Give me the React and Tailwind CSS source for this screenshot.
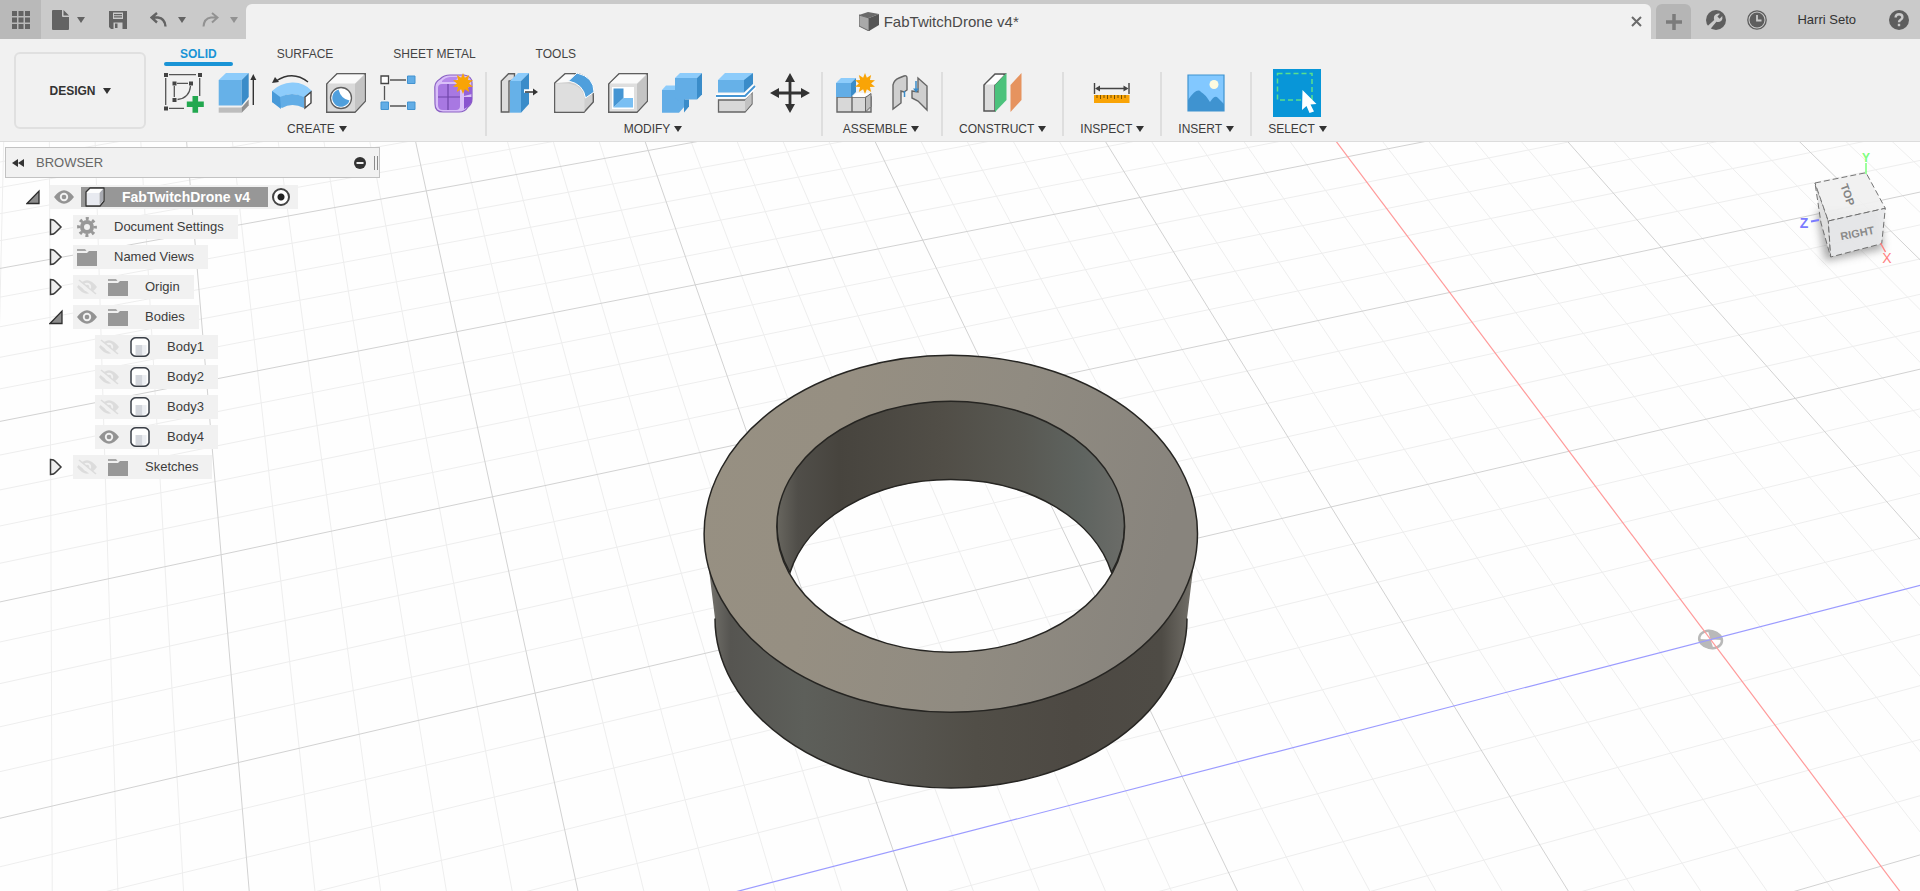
import React, { useState } from 'react';

const Caret = ({ className = 'fill-[#333]' }) => (
  <svg viewBox="0 0 8 6" className={`h-[6px] w-2 shrink-0 ${className}`} aria-hidden="true">
    <path d="M0 0h8L4 6z" />
  </svg>
);

const Icon = ({ children, size = 'h-10 w-10' }) => (
  <svg viewBox="0 0 40 40" className={`shrink-0 ${size}`} fill="none" aria-hidden="true">
    {children}
  </svg>
);

// Spiky sun that marks the "new" commands
const Burst = ({ cx, cy, r }) => {
  const points = Array.from({ length: 20 }, (_, i) => {
    const radius = i % 2 ? r * 0.58 : r;
    const angle = (i * Math.PI) / 10 - Math.PI / 2;
    return `${cx + radius * Math.cos(angle)},${cy + radius * Math.sin(angle)}`;
  }).join(' ');
  return <polygon points={points} fill="#f9a406" />;
};

/* ---------- ribbon icons ---------- */

const SketchIcon = () => (
  <Icon>
    <path d="M5 1.7h27M1.7 5v27M35.7 5v18M5 35.3h15M10.3 13v11M13 10.3h11M26.5 13q-1 12-13 13.5" stroke="#555" strokeWidth="1.3" />
    <path d="M0 0h4v4H0zM34 0h4v4h-4zM0 33.5h4v4H0zM8.5 8.5h4v4h-4zM25 8.5h4v4h-4zM8.5 25h4v4h-4z" fill="#444" />
    <path d="M28.5 23h5.600v5.500h5.700v5.600h-5.700v5.600h-5.600v-5.600h-5.700v-5.600h5.700z" fill="#22a84f" />
  </Icon>
);

const ExtrudeIcon = () => (
  <Icon>
    <path d="M.7 34.5h23v5.200H.7z" fill="#bdbdbd" />
    <path d="M23.7 34.5l7-8v6l-7 7.200z" fill="#909090" />
    <path d="M.7 7h23v25.500H.7z" fill="#66b1e8" />
    <path d="M.7 7L8 0h22.700l-7 7z" fill="#8dccfb" />
    <path d="M23.7 7l7-7v24l-7 8.500z" fill="#3a8cc9" />
    <path d="M35.3 5v27" stroke="#333" strokeWidth="1.4" />
    <path d="M32.3 7l3-6 3 6z" fill="#333" />
  </Icon>
);

const RevolveIcon = () => (
  <Icon>
    <path d="M36 9Q21-3 4 8" stroke="#333" strokeWidth="1.4" />
    <path d="M0 10l3-6 4 5z" fill="#333" />
    <path d="M0 18Q8 10 20 9.500T40 18l-7 7q-14-8-25 0z" fill="#8dccfb" />
    <path d="M0 18l8 6q12-6 24 0v11q-12-6-22 0L0 29z" fill="#62ade6" />
    <path d="M0 18l8 6 1 12-9-7z" fill="#4799d8" />
    <path d="M33 24l6-5v11l-6 5z" fill="#fff" stroke="#444" strokeWidth="1.4" />
  </Icon>
);

const HoleIcon = () => (
  <Icon>
    <path d="M.7 11L11 .7h28.300v27.600L29 39.300H.7z" fill="#d9d9d9" stroke="#5f5f5f" strokeWidth="1.4" />
    <path d="M2 10.500L11.500 1.500H38L29 10.500z" fill="#fafafa" />
    <path d="M29 11l9.500-9v26L29 38z" fill="#c4c4c4" />
    <circle cx="15" cy="25" r="10.5" fill="#fff" stroke="#5f5f5f" strokeWidth="1.3" />
    <path d="M12.500 16.500a8.800 8.800 0 1 0 11 11q-8.500-1.500-11-11z" fill="#4f9fdc" />
  </Icon>
);

const PatternIcon = () => (
  <Icon>
    <path d="M10 7h16M4.500 13v14M10 33h16" stroke="#555" strokeWidth="1.3" />
    <path d="M1 3h7.500v7.500H1z" fill="#fff" stroke="#444" strokeWidth="1.3" />
    <path d="M27.500 3H35v7.500h-7.500zM1 29h7.500v7.500H1zM27.500 29H35v7.500h-7.500z" fill="#62ade6" stroke="#4393d0" />
  </Icon>
);

const FormIcon = () => (
  <Icon>
    <path d="M.8 14Q1 9 6 6q4-4 10-4h14q8 1 8 8v16q0 5-4 8-3 5-9 5H9q-8 0-8-8z" fill="#d9bff8" stroke="#8b62c4" strokeWidth="1.2" />
    <path d="M4 15q0-4 4-4h14q4 0 4 4v18q0 4-4 4H9q-5 0-5-5z" fill="#a878e2" />
    <path d="M30 24h8v3q-1 6-8 9z" fill="#8a54cf" />
    <path d="M30 16l8-3v8l-8 2z" fill="#9662d8" />
    <path d="M8 8q3-3.500 8-4h8l-3 5H8z" fill="#b689ea" />
    <path d="M14 11v26M4 24h22" stroke="#6f45a8" strokeWidth="1.2" />
    <Burst cx={29} cy={10.5} r={10.5} />
  </Icon>
);

const PressPullIcon = () => (
  <Icon>
    <path d="M1.300 8L8.500.7h6v6L9 8v31H1.300z" fill="#ddd" stroke="#5f5f5f" strokeWidth="1.4" />
    <path d="M10 8h11v31.700H10z" fill="#66b1e8" />
    <path d="M10 8L18 0h11l-8 8z" fill="#8dccfb" />
    <path d="M21 8l8-8v31l-8 8.700z" fill="#3a8cc9" />
    <path d="M24 18h9" stroke="#fff" strokeWidth="3.5" />
    <path d="M25 19h9" stroke="#333" strokeWidth="1.5" />
    <path d="M33 15.500l5 3.500-5 3.500z" fill="#333" />
  </Icon>
);

const FilletIcon = () => (
  <Icon>
    <path d="M.7 10L11 .7h13Q39 5 39.300 23v6L30 39.300H.7z" fill="#cfcfcf" stroke="#5f5f5f" strokeWidth="1.4" />
    <path d="M2 10l9.500-8.500h9L15 9z" fill="#fbfbfb" />
    <path d="M1.500 10.500H14q15 2 16.500 15V38.500h-29z" fill="#dedede" />
    <path d="M14.500 8L23 0q17 4 17 19l-8.500 6q-2-14-17-17z" fill="#4f9fdc" stroke="#fff" />
  </Icon>
);

const ShellIcon = () => (
  <Icon>
    <path d="M.7 11L11 .7h28.300v27.600L29 39.300H.7z" fill="#dedede" stroke="#5f5f5f" strokeWidth="1.4" />
    <path d="M2 10.500L11.500 1.500H38L29 10.500z" fill="#fafafa" />
    <path d="M29 11l9.500-9v26L29 38z" fill="#c4c4c4" />
    <path d="M4 14h22v22H4z" fill="#fff" />
    <path d="M5.500 15.500h10V25l-10 9.500z" fill="#4595d3" />
    <path d="M15.500 25h9.500v9.500H5.500z" fill="#79bff3" />
  </Icon>
);

const CombineIcon = () => (
  <Icon>
    <path d="M0 17h23v16l-6 6.700H0z" fill="#62ade6" />
    <path d="M0 17l4-4.500h10V17z" fill="#8dccfb" />
    <path d="M13 5h22v21.500H22v6l-9-8z" fill="#62ade6" />
    <path d="M13 5l5-5h22l-5 5z" fill="#8dccfb" />
    <path d="M35 5l5-5v21.500l-5 5z" fill="#3a8cc9" />
    <path d="M22 26.500h5v7l-5 6z" fill="#3a8cc9" />
  </Icon>
);

const SplitIcon = () => (
  <Icon>
    <path d="M2.500 27H29l7-7v11l-7 8H2.500z" fill="#d8d8d8" stroke="#666" strokeWidth="1.3" />
    <path d="M29 27l6.500-7v11L29 38.500z" fill="#c2c2c2" />
    <path d="M2 7h26v12.500H2z" fill="#66b1e8" />
    <path d="M2 7l7-7h28l-7 7z" fill="#8dccfb" />
    <path d="M28 7l9-7v11l-9 8.500z" fill="#3a8cc9" />
    <path d="M0 23h29l10-10" stroke="#fff" strokeWidth="5" />
    <path d="M0 23h29l10-10" stroke="#4595d3" strokeWidth="1.8" />
  </Icon>
);

const MoveIcon = () => (
  <Icon>
    <path d="M20 6v28M6 20h28" stroke="#333" strokeWidth="2.8" />
    <path d="M20 0l5 9H15zM20 40l5-9H15zM0 20l9-5v10zM40 20l-9-5v10z" fill="#333" />
  </Icon>
);

const ComponentIcon = () => (
  <Icon>
    <path d="M1 24h34v15H1z" fill="#d8d8d8" stroke="#666" strokeWidth="1.4" />
    <path d="M16 24l5-4h13l-5 4z" fill="#fff" />
    <path d="M29.500 24.500l5.500-4v13l-5.500 5.500z" fill="#bdbdbd" stroke="#666" />
    <path d="M16 24v15" stroke="#666" strokeWidth="1.4" />
    <path d="M0 10h15v14H0z" fill="#62ade6" />
    <path d="M0 10l5-5h15l-5 5z" fill="#8dccfb" />
    <path d="M15 10l5-5v14l-5 5z" fill="#3a8cc9" />
    <Burst cx={29} cy={10.5} r={10.5} />
  </Icon>
);

const JointIcon = () => (
  <Icon>
    <path d="M3 12q1-5 6-7l5-2q3-1 3 2v12l-3 2-3-1v12l-8 6z" fill="#cfcfcf" stroke="#666" strokeWidth="1.4" />
    <path d="M22 18l6 1V5l9 8v24l-9-9-6-3z" fill="#cfcfcf" stroke="#666" strokeWidth="1.4" />
    <path d="M14.500 18v6M26 8v10" stroke="#3a8cc9" strokeWidth="1.5" />
    <path d="M23 15.500h6l-3 4z" fill="#3a8cc9" />
  </Icon>
);

const ConstructIcon = () => (
  <Icon>
    <path d="M1 12L12 1h10L12 12v26H1z" fill="#dcdcdc" stroke="#555" strokeWidth="1.5" />
    <path d="M2.500 11.500L12.500 2H21L12 11.500z" fill="#fff" />
    <path d="M12 12L23.500 0v27L12 39z" fill="#4cc27c" />
    <path d="M27.500 12L38.500 0v27l-11 12z" fill="#e6935f" />
  </Icon>
);

const InspectIcon = () => (
  <Icon>
    <path d="M2.500 10v11M37 10v11M5 15.500h29" stroke="#444" strokeWidth="1.4" />
    <path d="M3 15.500l5-3v6zM36.500 15.500l-5-3v6z" fill="#444" />
    <path d="M2 22h35.500v8H2z" fill="#f9a406" />
    <path d="M5 22v3M8.500 22v4M12 22v3M15.500 22v4M19 22v3M22.500 22v4M26 22v3M29.500 22v4M33 22v3" stroke="#7a5200" />
  </Icon>
);

const InsertIcon = () => (
  <Icon>
    <path d="M2 2h36v36H2z" fill="#82c8ff" />
    <path d="M2 27q9-13 13-8 4 2 9 10 5-8 8-4l6 6v7H2z" fill="#3f93d0" />
    <circle cx="28" cy="11.5" r="4.5" fill="#fdfbe0" />
    <path d="M2 2h36v36H2z" stroke="#3f93d0" strokeWidth="1.2" />
  </Icon>
);

const SelectIcon = () => (
  <svg viewBox="0 0 48 48" className="h-12 w-12 shrink-0" fill="none" aria-hidden="true">
    <path d="M0 0h48v48H0z" fill="#0896d8" />
    <path d="M4.500 4.500h34.500v26.500H4.500z" stroke="#59e08c" strokeWidth="1.5" strokeDasharray="5 3" />
    <path d="M29.500 21l14 14-6 .5 3.500 7-4.500 1.500-3-7-4.500 4z" fill="#fff" />
  </svg>
);

const ribbon = [
  { label: 'CREATE', icons: [SketchIcon, ExtrudeIcon, RevolveIcon, HoleIcon, PatternIcon, FormIcon] },
  { label: 'MODIFY', icons: [PressPullIcon, FilletIcon, ShellIcon, CombineIcon, SplitIcon, MoveIcon] },
  { label: 'ASSEMBLE', icons: [ComponentIcon, JointIcon] },
  { label: 'CONSTRUCT', icons: [ConstructIcon] },
  { label: 'INSPECT', icons: [InspectIcon] },
  { label: 'INSERT', icons: [InsertIcon] },
  { label: 'SELECT', icons: [SelectIcon] },
];

const RibbonGroup = ({ label, icons, first }) => {
  const wide = icons.length > 1;
  return (
    <div className="flex">
      {!first && <div className="mt-[3px] mb-[5px] w-[2px] bg-[#dedede]" />}
      <div className={`flex flex-col ${wide ? 'pr-[11px]' : 'px-4'} ${wide && !first ? 'pl-[13px]' : ''}`}>
        <div className="flex h-12 items-center justify-center gap-[14px]">
          {icons.map((ToolIcon, i) => (
            <button key={i} type="button" aria-label={`${label} ${i + 1}`}>
              <ToolIcon />
            </button>
          ))}
        </div>
        <button
          type="button"
          className={`flex h-6 items-center justify-center gap-1 text-xs text-[#3c3c3c] ${wide ? 'pr-1' : ''}`}
        >
          {label}
          <Caret />
        </button>
      </div>
    </div>
  );
};

const tabs = ['SOLID', 'SURFACE', 'SHEET METAL', 'TOOLS'];

const Toolbar = () => {
  const [active, setActive] = useState('SOLID');
  return (
    <div className="flex border-b border-[#dcdcdc] bg-[#f1f1f1] pl-[14px]">
      <button
        type="button"
        className="mt-[13px] mr-[18px] flex h-[77px] w-[132px] shrink-0 items-center justify-center gap-[7px] rounded-md border-2 border-[#e0e0e0] text-xs font-bold text-[#333]"
      >
        DESIGN
        <Caret />
      </button>
      <div className="pt-1">
        <div className="flex gap-7">
          {tabs.map((tab) => (
            <button
              key={tab}
              type="button"
              onClick={() => setActive(tab)}
              className={`relative h-[23px] px-4 pb-[2px] text-xs leading-5 ${
                tab === active ? 'font-bold text-[#1a94d6]' : 'text-[#444]'
              }`}
            >
              {tab}
              {tab === active && (
                <span className="absolute inset-x-0 bottom-0 h-1 rounded-full bg-[#1a94d6]" />
              )}
            </button>
          ))}
        </div>
        <div className="mt-[3px] flex">
          {ribbon.map((group, i) => (
            <RibbonGroup key={group.label} first={i === 0} {...group} />
          ))}
        </div>
      </div>
    </div>
  );
};

/* ---------- title bar ---------- */

const TitleBar = () => (
  <header className="flex h-[39px] bg-[#cacaca] text-[#636363]">
    <button type="button" aria-label="Data panel" className="flex w-[41px] items-center justify-center bg-[#b9b9b9]">
      <svg viewBox="0 0 18 18" className="h-[18px] w-[18px]" fill="currentColor">
        <path d="M0 0h5v5H0zM6.500 0h5v5h-5zM13 0h5v5h-5zM0 6.500h5v5H0zM6.500 6.500h5v5h-5zM13 6.500h5v5h-5zM0 13h5v5H0zM6.500 13h5v5h-5zM13 13h5v5h-5z" />
      </svg>
    </button>
    <button type="button" aria-label="File" className="ml-[11px] flex items-center gap-2">
      <svg viewBox="0 0 17 20" className="h-5 w-[17px]" fill="currentColor">
        <path d="M0 1q0-1 1-1h9v6q0 1 1 1h6v12q0 1-1 1H1q-1 0-1-1zM11.500 0L17 5.500h-5.500z" />
      </svg>
      <Caret className="fill-[#636363]" />
    </button>
    <button type="button" aria-label="Save" className="ml-6 flex items-center">
      <svg viewBox="0 0 18 18" className="h-[18px] w-[18px]" fill="currentColor" fillRule="evenodd">
        <path d="M0 0h18v18H2l-2-2zM4 1.500V8h10V1.500zM5 3h8v1.200H5zM5 5.300h8v1.200H5zM4.500 11.500V18h9v-6.500zM6 12.500h2.500V17H6z" />
      </svg>
    </button>
    <button type="button" aria-label="Undo" className="ml-[23px] flex items-center gap-[11px]">
      <svg viewBox="0 0 17 15" className="h-[15px] w-[17px]" fill="none" stroke="currentColor" strokeWidth="2.4">
        <path d="M7 1L1.500 5.500 7 10.500M2 5.500h6q7 1 7.500 9" />
      </svg>
      <Caret className="fill-[#636363]" />
    </button>
    <button type="button" aria-label="Redo" className="mr-2 ml-4 flex items-center gap-[11px] text-[#929292]">
      <svg viewBox="0 0 17 15" className="h-[15px] w-[17px]" fill="none" stroke="currentColor" strokeWidth="2">
        <path d="M10 1l5.500 4.500-5.500 5M15 5.500H9q-7 1-7.500 9" />
      </svg>
      <Caret className="fill-[#929292]" />
    </button>
    <div className="mt-1 flex flex-1 items-center rounded-t-md bg-[#f1f1f1] text-[#4a4a4a]">
      <div className="flex flex-1 items-center justify-center gap-[5px] text-[15px] leading-5">
        <svg viewBox="0 0 20 19" className="h-[19px] w-5" aria-hidden="true">
          <path d="M0 3l9-3 11 2-10 4z" fill="#6a6a6a" />
          <path d="M0 3l10 3v13L0 14z" fill="#a9a9a9" stroke="#666" />
          <path d="M10 6l10-4v11l-10 6z" fill="#555" />
        </svg>
        <h1>FabTwitchDrone v4*</h1>
      </div>
      <button type="button" aria-label="Close document" className="mr-[9px]">
        <svg viewBox="0 0 11 11" className="h-[11px] w-[11px]" stroke="#6b6b6b" strokeWidth="2">
          <path d="M1 1l9 9M10 1l-9 9" />
        </svg>
      </button>
    </div>
    <button type="button" aria-label="New document" className="mt-1 ml-[5px] flex w-[35px] items-center justify-center rounded-t-md bg-[#b5b5b5]">
      <svg viewBox="0 0 16 16" className="h-4 w-4" stroke="#7b7b7b" strokeWidth="3.5">
        <path d="M8 0v16M0 8h16" />
      </svg>
    </button>
    <button type="button" aria-label="Extensions" className="ml-[15px]">
      <svg viewBox="0 0 20 20" className="h-5 w-5">
        <circle cx="10" cy="10" r="10" fill="#5e5e5e" />
        <path d="M0 17.500L8.200 10Q7 6 10 4.200q2-1 4-.4l-2.600 2.700 2.200 2.200 2.700-2.600q.6 3-.9 4.600-2.200 2-5 1.100L4 19.500z" fill="#cacaca" />
      </svg>
    </button>
    <button type="button" aria-label="Job status" className="ml-[21px]">
      <svg viewBox="0 0 20 20" className="h-5 w-5" fill="none" stroke="#5e5e5e">
        <circle cx="10" cy="10" r="9.2" strokeWidth="1.3" />
        <circle cx="10" cy="10" r="7.5" fill="#5e5e5e" stroke="none" />
        <path d="M10 5v5.500h4.500" stroke="#cacaca" strokeWidth="1.8" />
      </svg>
    </button>
    <button type="button" className="ml-[30px] text-[13px] leading-5 whitespace-nowrap text-[#333]">
      Harri Seto
    </button>
    <button type="button" aria-label="Help" className="mr-[11px] ml-[33px]">
      <svg viewBox="0 0 20 20" className="h-5 w-5" fill="none">
        <circle cx="10" cy="10" r="10" fill="#5e5e5e" />
        <path d="M6.600 7.600q0-3.400 3.400-3.400t3.400 3q0 1.600-1.700 2.600T10 12.300" stroke="#cacaca" strokeWidth="2.4" />
        <path d="M8.800 13.800h2.400v2.400H8.800z" fill="#cacaca" />
      </svg>
    </button>
  </header>
);

/* ---------- browser tree ---------- */

const Eye = ({ on }) => (
  <svg viewBox="0 0 20 16" className="h-4 w-5" fill="none" aria-hidden="true">
    <path d="M0 8q10-13.500 20 0Q10 21.500 0 8z" fill={on ? '#939393' : '#dcdcdc'} />
    <circle cx="10" cy="8" r="4.2" fill="#f1f1f1" />
    <circle cx="10" cy="8" r="2.3" fill={on ? '#939393' : '#dcdcdc'} />
    {!on && (
      <>
        <path d="M1 3l16 13" stroke="#f1f1f1" strokeWidth="4" />
        <path d="M2 1l17 14" stroke="#dcdcdc" strokeWidth="1.6" />
      </>
    )}
  </svg>
);

const Folder = () => (
  <svg viewBox="0 0 20 17" className="h-[17px] w-5" aria-hidden="true">
    <path d="M0 4h10l2-2h8v15H0z" fill="#989898" />
    <path d="M0 0h8l1.500 2H0z" fill="#a8a8a8" />
  </svg>
);

const Gear = () => (
  <svg viewBox="0 0 20 20" className="h-5 w-5" fill="none" stroke="#989898" aria-hidden="true">
    <circle cx="10" cy="10" r="5" strokeWidth="4" />
    <circle cx="10" cy="10" r="8.3" strokeWidth="3.2" strokeDasharray="3 3.52" strokeDashoffset="1.5" />
  </svg>
);

const BodyIcon = () => (
  <svg viewBox="0 0 20 20" className="h-5 w-5" aria-hidden="true">
    <path d="M1 4.500Q2 1 6 .8h8q4 .2 5 3.700v11q-1 3.500-5 3.700H6q-4-.2-5-3.700z" fill="#fff" stroke="#3a3f47" strokeWidth="1.5" />
    <path d="M5.500 8h7v10h-7z" fill="#d3d6dc" />
    <path d="M12.500 8h4v9l-4 1z" fill="#eceef2" />
  </svg>
);

const RootIcon = () => (
  <svg viewBox="0 0 20 20" className="h-5 w-5" aria-hidden="true">
    <path d="M1 5l4-4h14v13l-4 5H1z" fill="#fdfdfd" stroke="#333" strokeWidth="1.3" strokeLinejoin="round" />
    <path d="M2 6h12v12H2z" fill="#e8eaf0" />
    <path d="M14.500 6L18 2v12l-3.500 4z" fill="#a9abb2" />
  </svg>
);

const Twisty = ({ open }) => (
  <svg viewBox="0 0 14 18" className="h-[18px] w-[14px]" aria-hidden="true">
    {open ? (
      <path d="M13 3v12.500H1z" fill="#8c8c8c" stroke="#2e2e2e" strokeWidth="1.3" />
    ) : (
      <path d="M1.500 1.500q3.500 0 5 2L12 9l-5.500 5.500q-1.500 2-5 2z" fill="#eee" stroke="#3a3a3a" strokeWidth="1.5" />
    )}
  </svg>
);

const icons = { gear: Gear, folder: Folder, body: BodyIcon };
const indents = { 1: 'pl-[49px]', 2: 'pl-[71px]' };

const nodes = [
  { name: 'Document Settings', icon: 'gear', depth: 1 },
  { name: 'Named Views', icon: 'folder', depth: 1 },
  { name: 'Origin', icon: 'folder', depth: 1, shown: false },
  { name: 'Bodies', icon: 'folder', depth: 1, shown: true, open: true },
  { name: 'Body1', icon: 'body', depth: 2, shown: false },
  { name: 'Body2', icon: 'body', depth: 2, shown: false },
  { name: 'Body3', icon: 'body', depth: 2, shown: false },
  { name: 'Body4', icon: 'body', depth: 2, shown: true },
  { name: 'Sketches', icon: 'folder', depth: 1, shown: false },
];

const TreeNode = ({ name, icon, depth, shown, open = false }) => {
  const [visible, setVisible] = useState(shown);
  const NodeIcon = icons[icon];
  return (
    <li className={`flex items-center ${indents[depth]}`}>
      <div className="w-6">
        {depth === 1 && (
          <button type="button" aria-label={`Toggle ${name}`} className="block">
            <Twisty open={open} />
          </button>
        )}
      </div>
      <div className="flex h-6 items-center bg-[#f1f1f1] pr-[14px] pl-1">
        {shown !== undefined && (
          <button
            type="button"
            aria-label={`Show ${name}`}
            aria-pressed={visible}
            onClick={() => setVisible(!visible)}
            className="mr-[11px]"
          >
            <Eye on={visible} />
          </button>
        )}
        <NodeIcon />
        <span className="ml-[17px]">{name}</span>
      </div>
    </li>
  );
};

const Browser = () => (
  <aside className="relative w-[380px] pt-[5px] pl-[5px] text-[13px] leading-5 text-[#3c3c3c]">
    <div className="flex h-[31px] items-center border border-[#c2c2c2] bg-[#f1f1f1] pr-px pl-[6px]">
      <button type="button" aria-label="Collapse browser">
        <svg viewBox="0 0 12 8" className="h-2 w-3" fill="#333">
          <path d="M6 0v8L0 4zM12 0v8L6 4z" />
        </svg>
      </button>
      <h2 className="ml-3 flex-1 text-[#666]">BROWSER</h2>
      <button type="button" aria-label="Browser options">
        <svg viewBox="0 0 12 12" className="h-3 w-3">
          <circle cx="6" cy="6" r="6" fill="#333" />
          <path d="M2.500 5h7v2h-7z" fill="#f1f1f1" />
        </svg>
      </button>
      <span className="ml-2 h-[14px] w-1 border-x border-[#8a8a8a]" />
    </div>
    <ul className="-ml-[5px] flex flex-col gap-[6px] pt-[7px]">
      <li className="flex items-center pl-[26px]">
        <button type="button" aria-label="Toggle document" className="w-6">
          <Twisty open />
        </button>
        <div className="flex h-6 items-center bg-[#f1f1f1] pr-2 pl-1">
          <Eye on />
          <div className="ml-[7px] flex h-5 items-center bg-[#979797] pr-[18px] pl-1 text-sm font-bold text-white">
            <RootIcon />
            <span className="ml-[17px]">FabTwitchDrone v4</span>
          </div>
          <input
            type="radio"
            name="active-component"
            aria-label="Activate FabTwitchDrone v4"
            defaultChecked
            className="ml-1 h-[18px] w-[18px] appearance-none rounded-full border-2 border-[#444] bg-[radial-gradient(circle,#222_3px,#fff_4px)]"
          />
        </div>
      </li>
      {nodes.map((node) => (
        <TreeNode key={node.name} {...node} />
      ))}
    </ul>
  </aside>
);

/* ---------- 3D view ---------- */

// Ground plane (u, v) in major grid cells -> screen, origin at the axis marker
const project = (u, v) => {
  const w = 1 + 0.0281 * u + 0.0927 * v;
  return [(1710.6 + 297.5 * u + 3.97 * v) / w, (639 - 46.6 * u - 146.45 * v) / w];
};

const segment = (from, to) => {
  const [x1, y1] = project(...from);
  const [x2, y2] = project(...to);
  return `M${x1.toFixed(1)} ${y1.toFixed(1)}L${x2.toFixed(1)} ${y2.toFixed(1)}`;
};

const gridLines = () => {
  const minor = [];
  const major = [];
  for (let i = -40; i <= 40; i++) {
    if (i === 0) continue;
    const target = i % 5 === 0 ? major : minor;
    target.push(segment([i / 5, -3], [i / 5, 8]), segment([-8, i / 5], [6, i / 5]));
  }
  return { minor: minor.join(''), major: major.join('') };
};

const { minor, major } = gridLines();

const Ring = () => (
  <g stroke="#262522" strokeWidth="1.5">
    <path
      d="M706 545L715 618A236 169.500 0 0 0 1187 618L1196 545A246.700 172 0 0 1 706 545z"
      fill="url(#side)"
      stroke="none"
    />
    <path d="M715 618A236 169.500 0 0 0 1187 618" fill="none" />
    <path d="M790 572A173.900 125.500 0 1 1 1111.500 572A165 120 0 0 0 790 572z" fill="url(#wall)" />
    <path
      d="M704.100 533.200a246.700 178.500 0 1 0 493.400 0a246.700 178.500 0 1 0-493.400 0zM776.800 526.200a173.900 125.500 0 1 0 347.800 0a173.900 125.500 0 1 0-347.800 0z"
      fill="url(#face)"
      fillRule="evenodd"
    />
  </g>
);

const Scene = () => (
  <svg
    viewBox="0 141 1920 750"
    preserveAspectRatio="xMidYMid slice"
    className="absolute inset-0 h-full w-full"
    fill="none"
    role="img"
    aria-label="Ring body on the ground grid"
  >
    <defs>
      <linearGradient id="face" x1="0" y1="0" x2="1" y2="0.15">
        <stop offset="0" stopColor="#979082" />
        <stop offset="0.3" stopColor="#968f82" />
        <stop offset="0.65" stopColor="#908b81" />
        <stop offset="1" stopColor="#88847d" />
      </linearGradient>
      <linearGradient id="side">
        <stop offset="0" stopColor="#77756f" />
        <stop offset="0.05" stopColor="#565551" />
        <stop offset="0.2" stopColor="#5d5f5a" />
        <stop offset="0.34" stopColor="#595853" />
        <stop offset="0.55" stopColor="#514e47" />
        <stop offset="0.75" stopColor="#4d4943" />
        <stop offset="0.93" stopColor="#4e4b45" />
        <stop offset="1" stopColor="#77746d" />
      </linearGradient>
      <linearGradient id="wall">
        <stop offset="0" stopColor="#68665f" />
        <stop offset="0.06" stopColor="#504e49" />
        <stop offset="0.18" stopColor="#47443e" />
        <stop offset="0.48" stopColor="#514e47" />
        <stop offset="0.7" stopColor="#585852" />
        <stop offset="0.88" stopColor="#5f6460" />
        <stop offset="1" stopColor="#6b6c68" />
      </linearGradient>
    </defs>
    <path d={minor} stroke="#eee" />
    <path d={major} stroke="#d2d2d2" />
    <g transform="rotate(12 1710.6 639)">
      <ellipse cx="1710.6" cy="639" rx="11.5" ry="8.5" stroke="#b9b9b9" strokeWidth="2.5" />
      <path d="M1710.600 639l-5-9q14-1 16.500 7zM1710.600 639l5 9q-14 1-16.500-7z" fill="#b9b9b9" />
    </g>
    <path d={segment([0, -3], [0, 8])} stroke="#ff9a9a" strokeWidth="1.2" />
    <path d={segment([-8, 0], [6, 0])} stroke="#9b9bff" strokeWidth="1.2" />
    <Ring />
  </svg>
);

const ViewCube = () => (
  <svg
    viewBox="1796 149 112 128"
    className="absolute top-2 right-3 h-32 w-28 font-bold"
    aria-label="View cube"
    role="img"
  >
    <defs>
      <filter id="shadow" x="-50%" y="-50%" width="200%" height="200%">
        <feGaussianBlur stdDeviation="4" />
      </filter>
    </defs>
    <path d="M1817 210l8 50 58-12-4-40z" fill="#555" opacity="0.5" filter="url(#shadow)" />
    <g stroke="#6a6a6a" strokeDasharray="6 3" opacity="0.94">
      <path d="M1815 182l13.300 38 2.400 36-9.700-34z" fill="#e2e2e2" />
      <path d="M1815 182l51-10.300 19.300 35.600-57 12.700z" fill="#f1f1f1" />
      <path d="M1828.300 220l57-12.700-3.600 35.400-51 13.300z" fill="#e9eaec" />
    </g>
    <path d="M1866 173v-11" stroke="#7dff7d" strokeWidth="1.5" />
    <path d="M1811 220.500l8-1.500" stroke="#7b7bff" strokeWidth="2" />
    <path d="M1880.500 242l5 9" stroke="#ff8080" strokeWidth="1.5" />
    <g fontSize="12" textAnchor="middle">
      <text x="1866" y="161" fill="#7dff7d">Y</text>
      <text x="1804" y="227" fill="#7b7bff" fontSize="14">Z</text>
      <text x="1887" y="262" fill="#ff8080" fontSize="14" className="font-normal">X</text>
      <text transform="translate(1844 195) rotate(70)" fill="#858585" fontSize="11">TOP</text>
      <text transform="translate(1858 236) rotate(-11)" fill="#8a8a8a" fontSize="11">RIGHT</text>
    </g>
  </svg>
);

export default function App() {
  return (
    <div className="flex min-h-screen flex-col bg-white font-['Liberation_Sans',Arial,sans-serif]">
      <TitleBar />
      <Toolbar />
      <main className="relative flex-1 overflow-hidden bg-[#fefefe]">
        <Scene />
        <Browser />
        <ViewCube />
      </main>
    </div>
  );
}
